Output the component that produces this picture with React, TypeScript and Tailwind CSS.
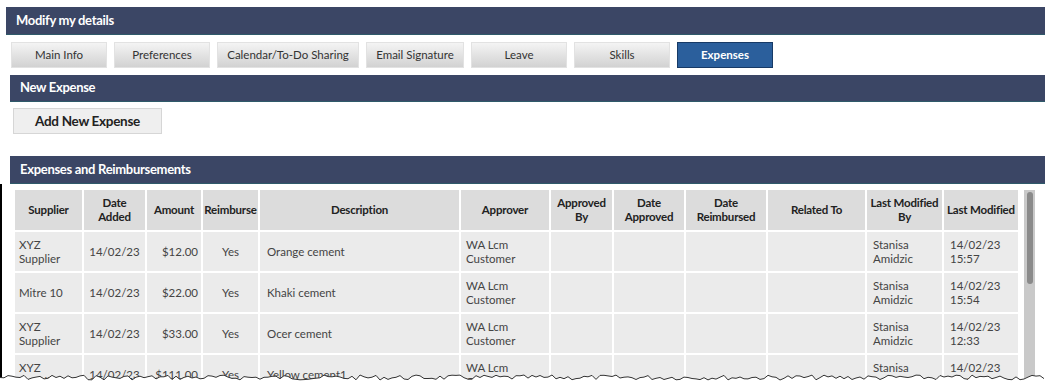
import React from "react";

const tabs = [
  { label: "Main Info", w: "w-[96px]" },
  { label: "Preferences", w: "w-[96px]" },
  { label: "Calendar/To-Do Sharing", w: "w-[142px]" },
  { label: "Email Signature", w: "w-[98px]" },
  { label: "Leave", w: "w-[96px]" },
  { label: "Skills", w: "w-[96px]" },
];

const columns = [
  { label: "Supplier", w: 67, align: "text-left pl-[4px] pr-[3px]", head: "px-[4px]" },
  { label: "Date Added", w: 61, align: "text-center px-[3px]", head: "px-[5px]" },
  { label: "Amount", w: 54, align: "text-right pl-[3px] pr-[3px]", head: "px-[3px]" },
  { label: "Reimburse", w: 55, align: "text-center px-[3px]", head: "px-0" },
  { label: "Description", w: 199, align: "text-left pl-[7px] pr-[3px]", head: "px-[4px]" },
  { label: "Approver", w: 88, align: "text-left pl-[5px] pr-[3px]", head: "px-[4px]" },
  { label: "Approved By", w: 61, align: "text-left px-[5px]", head: "px-[2px]" },
  { label: "Date Approved", w: 70, align: "text-left px-[5px]", head: "px-[2px]" },
  { label: "Date Reimbursed", w: 80, align: "text-left px-[5px]", head: "px-[4px]" },
  { label: "Related To", w: 97, align: "text-left px-[5px]", head: "px-[4px]" },
  { label: "Last Modified By", w: 75, align: "text-left pl-[6px] pr-[3px]", head: "px-[2px]" },
  { label: "Last Modified", w: 74, align: "text-left pl-[6px] pr-[3px]", head: "px-0" },
];

const rows = [
  ["XYZ Supplier", "14/02/23", "$12.00", "Yes", "Orange cement", "WA Lcm Customer", "", "", "", "", "Stanisa Amidzic", "14/02/23 15:57"],
  ["Mitre 10", "14/02/23", "$22.00", "Yes", "Khaki cement", "WA Lcm Customer", "", "", "", "", "Stanisa Amidzic", "14/02/23 15:54"],
  ["XYZ Supplier", "14/02/23", "$33.00", "Yes", "Ocer cement", "WA Lcm Customer", "", "", "", "", "Stanisa Amidzic", "14/02/23 12:33"],
  ["XYZ Supplier", "14/02/23", "$111.00", "Yes", "Yellow cement1", "WA Lcm Customer", "", "", "", "", "Stanisa Amidzic", "14/02/23 12:30"],
];

function SectionBar({ title, className }: { title: string; className: string }) {
  return (
    <div className={`flex items-center bg-[#3b4665] border-b border-[#2f5a6a] text-white font-bold text-[13px] tracking-[-0.3px] ${className}`}>
      {title}
    </div>
  );
}

// jagged "torn paper" edge along the bottom of the screenshot
function TornEdge() {
  const pts: string[] = [];
  let seed = 7;
  for (let x = 0; x <= 1045; x += 4) {
    seed = (seed * 9301 + 49297) % 233280;
    const y = 4 + (seed / 233280) * 5;
    pts.push(`${x},${y.toFixed(1)}`);
  }
  const line = pts.join(" ");
  return (
    <svg className="absolute left-0 bottom-0" width={1045} height={14} viewBox="0 0 1045 14">
      <polygon points={`0,14 ${line} 1045,14`} fill="#ffffff" />
      <polyline points={line} fill="none" stroke="#333" strokeWidth={1} />
    </svg>
  );
}

export default function App() {
  return (
    <div className="relative w-[1045px] h-[385px] overflow-hidden bg-white font-['Lato','Liberation_Sans',sans-serif]">
      <SectionBar title="Modify my details" className="mt-[7px] ml-[6px] h-[28px] pl-[10px]" />

      <div className="mt-[7px] ml-[11px] flex gap-[7px]">
        {tabs.map((t) => (
          <div
            key={t.label}
            className={`${t.w} h-[26px] flex items-center justify-center border border-[#e2e2e2] bg-gradient-to-b from-[#f4f4f4] to-[#d2d2d2] text-[11.5px] text-[#333]`}
          >
            {t.label}
          </div>
        ))}
        <div className="w-[96px] h-[26px] flex items-center justify-center border border-[#173a66] bg-[#2b5f9c] text-[11.5px] font-bold text-white">
          Expenses
        </div>
      </div>

      <SectionBar title="New Expense" className="mt-[7px] ml-[10px] h-[27px] pl-[10px]" />

      <div className="mt-[6px] ml-[13px] w-[149px] h-[26px] flex items-center justify-center border border-[#d6d6d6] bg-[#efefef] text-[13.5px] font-bold text-[#222] tracking-[-0.3px]">
        Add New Expense
      </div>

      <SectionBar title="Expenses and Reimbursements" className="mt-[22px] ml-[10px] h-[28px] pl-[10px]" />

      <div className="flex h-[220px] border-l-2 border-black">
        <div className="pl-[11px] pt-[4px]">
          <table className="w-[1007px] table-fixed border-separate border-spacing-x-[2px] border-spacing-y-[2px]">
            <colgroup>
              {columns.map((c) => (
                <col key={c.label} style={{ width: c.w }} />
              ))}
            </colgroup>
            <thead>
              <tr>
                {columns.map((c) => (
                  <th
                    key={c.label}
                    className={`h-[40px] bg-[#dcdcdc] text-center text-[11.5px] leading-[14px] font-bold text-[#222] tracking-[-0.2px] ${c.head}`}
                  >
                    {c.label}
                  </th>
                ))}
              </tr>
            </thead>
            <tbody>
              {rows.map((r, i) => (
                <tr key={i}>
                  {r.map((cell, j) => (
                    <td
                      key={j}
                      className={`h-[39px] bg-[#ebebeb] text-[11.5px] leading-[14px] text-[#444] align-middle ${columns[j].align}`}
                    >
                      {cell}
                    </td>
                  ))}
                </tr>
              ))}
            </tbody>
          </table>
        </div>
        <div className="ml-[4px] mt-[6px] w-[11px] bg-[#c9c9c9] flex justify-center pt-[2px]">
          <div className="w-[6px] h-[92px] rounded-full bg-[#8a8a8a]" />
        </div>
      </div>

      <TornEdge />
    </div>
  );
}
